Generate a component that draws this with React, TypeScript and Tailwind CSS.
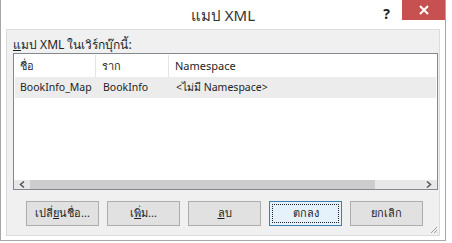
import React from "react";

const font = { fontFamily: '"Noto Sans", "DejaVu Sans", sans-serif' };

const buttons = [
  { key: "rename", label: <>เปลี่<span className="underline">ย</span>นชื่อ...</> },
  { key: "add", label: <>เ<span className="underline">พิ่</span>ม...</> },
  { key: "delete", label: <><span className="underline">ล</span>บ</> },
  { key: "ok", label: <>ตกลง</>, primary: true },
  { key: "cancel", label: <>ยกเลิก</> },
];

export default function App() {
  return (
    <div className="w-[452px] h-[243px] bg-white text-[#1e1e1e]" style={font}>
      <div className="w-[446px] h-[241px] border border-t-0 border-[#a7a7a7] bg-white flex flex-col">
        {/* title bar */}
        <div className="h-[29px] flex items-start relative">
          <div className="flex-1 text-center text-[15px] text-[#333] pt-[5px] leading-[20px]">แมป XML</div>
          <div className="absolute right-[55px] top-[3px] text-[14px] font-bold text-[#222]">?</div>
          <div className="absolute right-0 top-0 w-[43px] h-[20px] bg-[#c75050] flex items-center justify-center">
            <svg width="10" height="10" viewBox="0 0 10 10">
              <path d="M1 1 L9 9 M9 1 L1 9" stroke="#fff" strokeWidth="2" />
            </svg>
          </div>
        </div>

        {/* body panel */}
        <div className="mx-[5px] h-[207px] border border-[#dcdcdc] bg-[#f0f0f0] flex flex-col">
          <div className="pl-[6px] pt-[8px] h-[23px] text-[12px] leading-[14px]">
            <span className="underline">แ</span>มป XML ในเวิร์กบุ๊กนี้:
          </div>

          {/* list box */}
          <div className="ml-[6px] w-[425px] h-[139px] border border-[#828790] bg-white flex flex-col text-[11px]">
            <div className="h-[23px] pt-[1px] flex items-center">
              <div className="w-[82px] h-full border-r border-[#e5e5e5] pl-[6px] flex items-center">ชื่อ</div>
              <div className="w-[73px] h-full border-r border-[#e5e5e5] pl-[6px] flex items-center">ราก</div>
              <div className="flex-1 pl-[6px] flex items-center">Namespace</div>
            </div>
            <div className="h-[21px] pt-[1px] bg-[#ececec] flex items-center mx-[1px] text-[10.5px]">
              <div className="w-[82px] pl-[5px]">BookInfo_Map</div>
              <div className="w-[73px] pl-[6px]">BookInfo</div>
              <div className="flex-1 pl-[6px]">&lt;ไม่มี Namespace&gt;</div>
            </div>
            <div className="flex-1" />
            {/* horizontal scrollbar */}
            <div className="h-[9px] flex bg-[#e8e8e8]">
              <div className="w-[16px] flex items-center justify-center">
                <svg width="6" height="7" viewBox="0 0 6 7">
                  <path d="M5 0.5 L1.5 3.5 L5 6.5" stroke="#555" strokeWidth="1.5" fill="none" />
                </svg>
              </div>
              <div className="w-[345px] bg-[#cdcdcd]" />
              <div className="flex-1" />
              <div className="w-[16px] flex items-center justify-center">
                <svg width="6" height="7" viewBox="0 0 6 7">
                  <path d="M1 0.5 L4.5 3.5 L1 6.5" stroke="#555" strokeWidth="1.5" fill="none" />
                </svg>
              </div>
            </div>
          </div>

          {/* buttons */}
          <div className="mt-[11px] pl-[19px] flex gap-[8px]">
            {buttons.map((b) => (
              <div
                key={b.key}
                className={
                  b.primary
                    ? "w-[73px] h-[25px] border border-[#3c7fb1] bg-[#e5f1fb] p-[2px]"
                    : "w-[73px] h-[25px] border border-[#adadad] bg-[#e1e1e1] p-[2px]"
                }
              >
                <div
                  className={
                    b.primary
                      ? "w-full h-full border border-dotted border-[#222] flex items-center justify-center text-[11px]"
                      : "w-full h-full flex items-center justify-center text-[11px]"
                  }
                >
                  {b.label}
                </div>
              </div>
            ))}
          </div>

          <div className="flex-1 flex justify-end items-end pr-[1px] pb-[1px]">
            <svg width="8" height="8" viewBox="0 0 8 8">
              <path d="M7 1 L1 7 M7 4 L4 7 M7 6.5 L6.5 7" stroke="#a0a0a0" strokeWidth="1" />
            </svg>
          </div>
        </div>
      </div>
    </div>
  );
}
